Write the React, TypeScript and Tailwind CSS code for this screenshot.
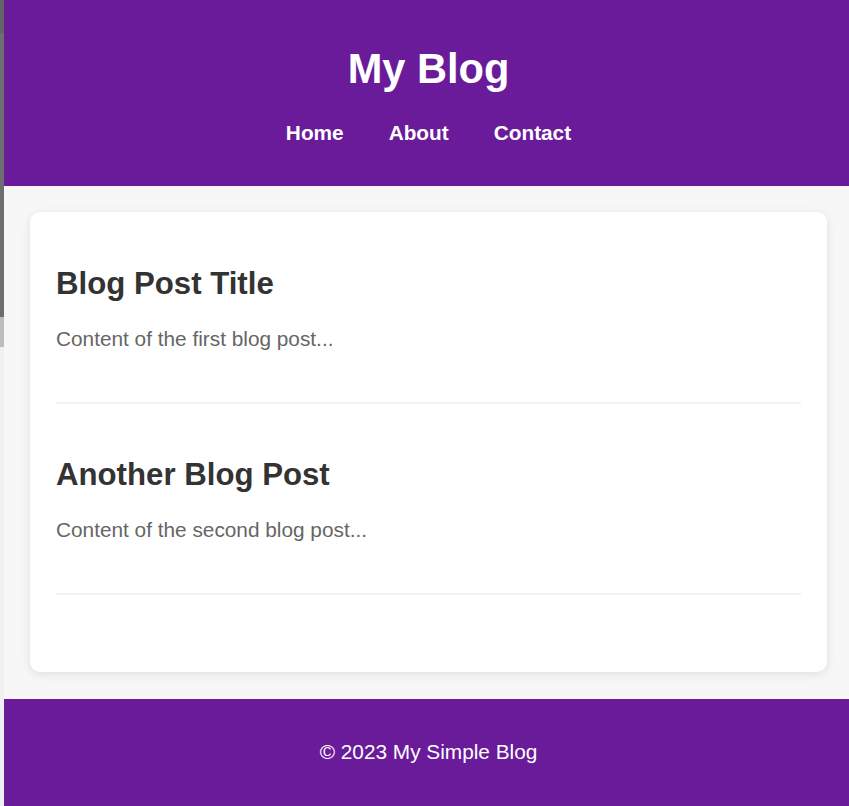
import React from "react";

const posts = [
  { title: "Blog Post Title", body: "Content of the first blog post..." },
  { title: "Another Blog Post", body: "Content of the second blog post..." },
];

export default function App() {
  return (
    <div className="flex min-h-[806px] w-full overflow-hidden bg-[#f0f0f0]" style={{ fontFamily: '"Liberation Sans", Arial, sans-serif' }}>
      <div className="flex w-[4px] shrink-0 flex-col">
        <div className="h-[33px] bg-[#656565]" />
        <div className="h-[284px] bg-[#6e6e6e]" />
        <div className="h-[30px] bg-[#bdbdbd]" />
        <div className="flex-1 bg-[#f0f0f0]" />
      </div>
      <div className="flex w-[849px] shrink-0 flex-col bg-[#f7f7f7]">
        <header className="bg-[#6a1b9a] pt-[46px] pb-[42px] text-center text-white">
          <h1 className="text-[41.6px] font-bold leading-[46.5px]">My Blog</h1>
          <nav className="mt-[28px] flex justify-center gap-[45px] text-[20.8px] font-bold leading-[23px]">
            <a href="#">Home</a>
            <a href="#">About</a>
            <a href="#">Contact</a>
          </nav>
        </header>
        <main className="mx-[26px] mt-[26px] mb-[27px] rounded-[10px] bg-white px-[26px] pt-[1px] pb-[77px] shadow-[0_2px_10px_rgba(0,0,0,0.1)]">
          {posts.map((p, i) => (
            <article key={i} className="mt-[27px] border-b-2 border-[#f2f2f2] pt-[26px]">
              <h2 className="mb-[26px] text-[31.2px] font-bold leading-[35px] text-[#333333]">{p.title}</h2>
              <p className="mb-[52px] text-[20.8px] leading-[23px] text-[#666666]">{p.body}</p>
            </article>
          ))}
        </main>
        <footer className="flex-1 bg-[#6a1b9a] pt-[41px] pb-[50px] text-center text-[20.8px] leading-[23px] text-white">
          <p>© 2023 My Simple Blog</p>
        </footer>
      </div>
    </div>
  );
}
